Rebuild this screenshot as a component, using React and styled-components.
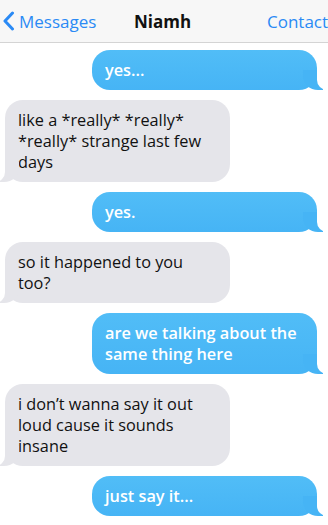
import React from "react";
import styled, { createGlobalStyle } from "styled-components";

const GlobalStyle = createGlobalStyle`
  body {
    margin: 0;
    background: #fff;
    font-family: "Open Sans", "DejaVu Sans", sans-serif;
  }
`;

const Screen = styled.div`
  width: 328px;
  height: 525px;
  overflow: hidden;
  background: #fff;
`;

const Header = styled.div`
  height: 42px;
  display: flex;
  align-items: center;
  background: #f7f7f7;
  border-bottom: 1px solid #d4d4d4;
  font-size: 17px;
  white-space: nowrap;
  overflow: hidden;
`;

const Back = styled.div`
  display: flex;
  align-items: center;
  gap: 4px;
  padding-left: 2px;
  color: #2a8af5;
  width: 132px;
`;

const Title = styled.div`
  font-weight: 700;
  color: #111;
  flex: 1;
`;

const Contact = styled.div`
  color: #2a8af5;
  width: 61px;
`;

const Thread = styled.div`
  display: flex;
  flex-direction: column;
  gap: 10px;
  padding: 7px 11px 0 5px;
`;

const Bubble = styled.div`
  position: relative;
  width: 225px;
  box-sizing: border-box;
  padding: 9.5px 13px;
  border-radius: 18px;
  font-size: 16.3px;
  line-height: 21px;
  align-self: ${(p) => (p.$sent ? "flex-end" : "flex-start")};
  color: ${(p) => (p.$sent ? "#fff" : "#111")};
  background: ${(p) =>
    p.$sent ? "linear-gradient(#51bdf7, #46b4f5)" : "#e5e5ea"};
  font-weight: ${(p) => (p.$sent ? 600 : 400)};

  &::before {
    content: "";
    position: absolute;
    bottom: 0;
    height: 20px;
    width: 20px;
    ${(p) =>
      p.$sent
        ? `right: -6px; background: #46b4f5; border-bottom-left-radius: 15px 14px;`
        : `left: -6px; background: #e5e5ea; border-bottom-right-radius: 15px 14px;`}
  }

  &::after {
    content: "";
    position: absolute;
    bottom: 0;
    height: 20px;
    width: 12px;
    background: #fff;
    ${(p) =>
      p.$sent
        ? `right: -12px; border-bottom-left-radius: 10px;`
        : `left: -12px; border-bottom-right-radius: 10px;`}
  }
`;

const messages = [
  { sent: true, text: "yes..." },
  { sent: false, text: "like a *really* *really* *really* strange last few days" },
  { sent: true, text: "yes." },
  { sent: false, text: "so it happened to you too?" },
  { sent: true, text: "are we talking about the same thing here" },
  { sent: false, text: "i don’t wanna say it out loud cause it sounds insane" },
  { sent: true, text: "just say it..." },
];

export default function App() {
  return (
    <Screen>
      <GlobalStyle />
      <Header>
        <Back>
          <svg width="13" height="20" viewBox="0 0 13 20">
            <path
              d="M10.5 2 L3 10 L10.5 18"
              fill="none"
              stroke="#2a8af5"
              strokeWidth="3"
              strokeLinecap="round"
              strokeLinejoin="round"
            />
          </svg>
          Messages
        </Back>
        <Title>Niamh</Title>
        <Contact>Contact</Contact>
      </Header>
      <Thread>
        {messages.map((m, i) => (
          <Bubble key={i} $sent={m.sent}>
            {m.text}
          </Bubble>
        ))}
      </Thread>
    </Screen>
  );
}
